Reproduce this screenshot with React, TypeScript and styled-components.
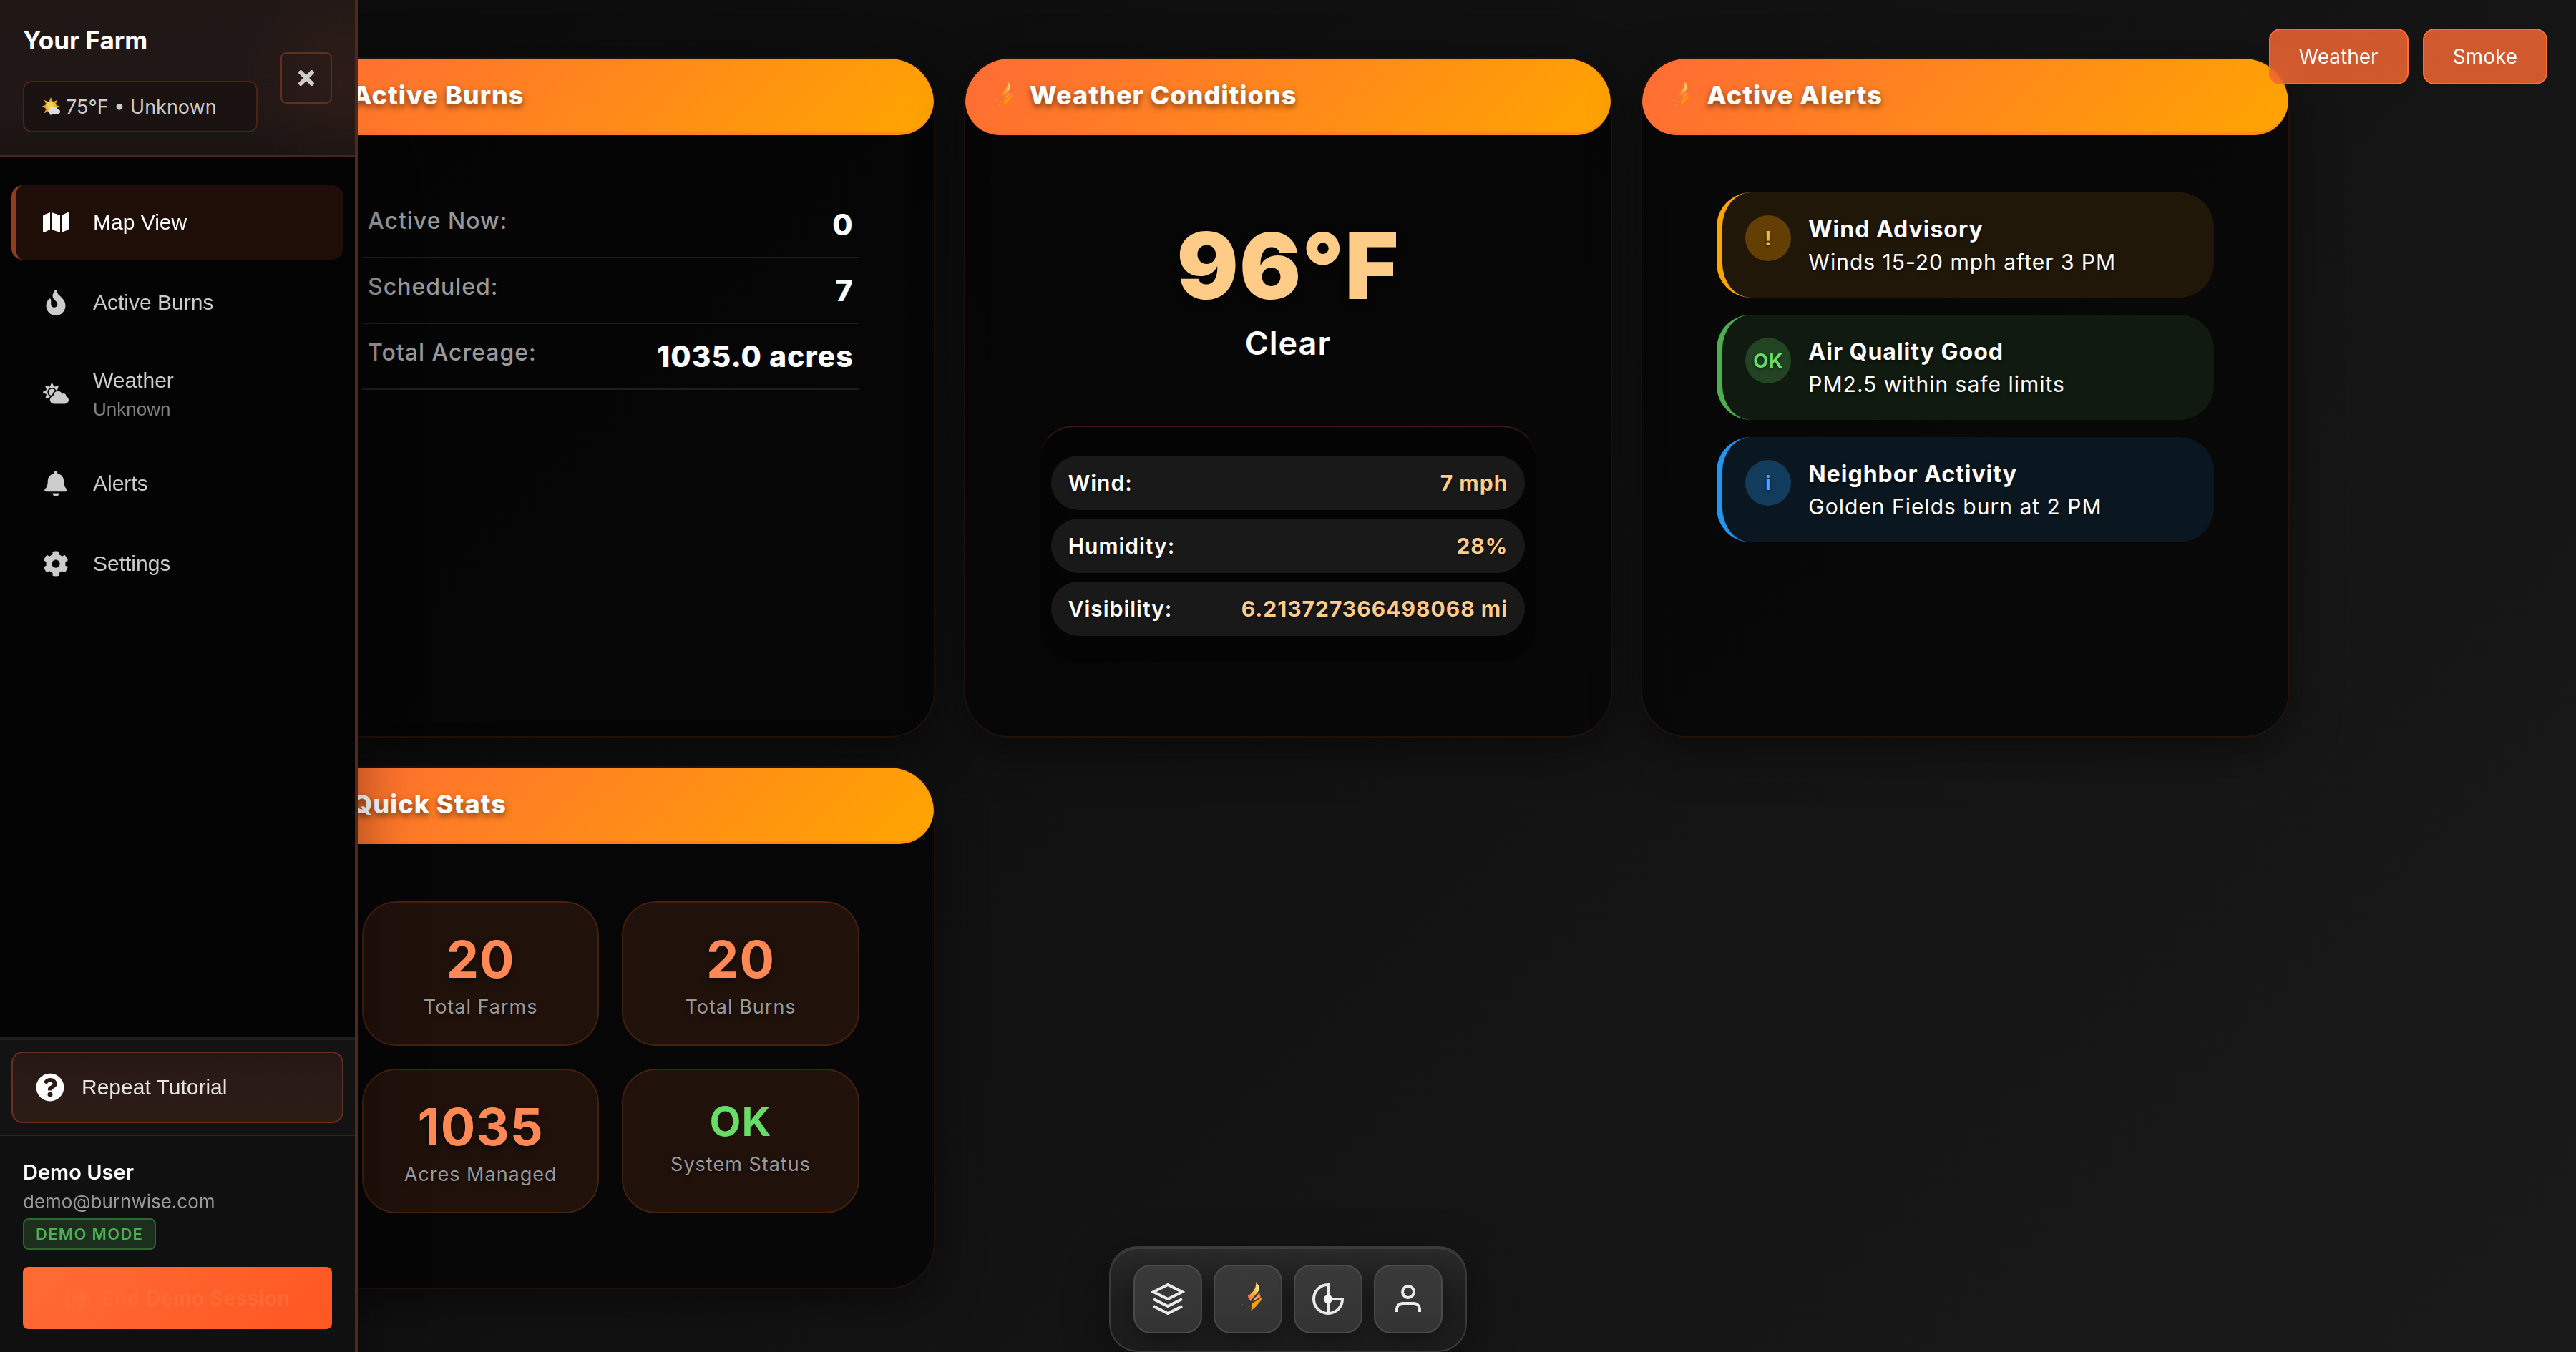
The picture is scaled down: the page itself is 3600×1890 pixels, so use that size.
import React from "react";
import styled, { createGlobalStyle, css } from "styled-components";
import {
  FaBell,
  FaCloudSun,
  FaCog,
  FaFire,
  FaMap,
  FaQuestionCircle,
  FaSignOutAlt,
  FaTimes,
} from "react-icons/fa";

const inter = `Inter, "Liberation Sans", sans-serif`;
const arial = `"Liberation Sans", Arial, sans-serif`;

const GlobalStyle = createGlobalStyle`
  *, *::before, *::after { box-sizing: border-box; }
  body {
    margin: 0;
    background: #0a0a0a;
    color: #ffffff;
    font-family: ${inter};
  }
  h1, h2, h3, p, dl, dd, dt, ul { margin: 0; padding: 0; }
  ul { list-style: none; }
  button { font: inherit; cursor: pointer; }
`;

/* ---------- Page ---------- */

const Page = styled.div`
  min-height: 100vh;
  background: linear-gradient(135deg, #0a0a0a 0%, #1a1a1a 100%);
`;

const Dashboard = styled.main`
  display: grid;
  grid-template-columns: repeat(3, minmax(0, 1fr));
  gap: 40px;
  max-width: 2800px;
  margin: 0 auto;
  padding: 80px 0;
  letter-spacing: 1px;
`;

/* ---------- Cards ---------- */

const CardBox = styled.section`
  overflow: hidden;
  border: 2px solid rgba(255, 107, 53, 0.1);
  border-radius: 64px;
  background: rgba(0, 0, 0, 0.6);
  box-shadow: 0 16px 64px rgba(0, 0, 0, 0.5);
`;

const CardHeader = styled.header`
  display: flex;
  align-items: center;
  gap: 20px;
  padding: 28px 30px;
  border-bottom: 4px solid rgba(255, 107, 53, 0.3);
  border-radius: 48px;
  background: linear-gradient(135deg, #ff6b35 0%, #ffa500 100%);
`;

const CardTitle = styled.h2`
  font-size: 36px;
  font-weight: 800;
  line-height: 47px;
  text-shadow: 0 4px 8px rgba(0, 0, 0, 0.5);
`;

const CardBody = styled.div`
  padding: 80px 104px 104px;
`;

const BurnRow = styled.div`
  display: flex;
  justify-content: space-between;
  align-items: flex-start;
  padding: 16px 8px;
  border-bottom: 2px solid #1e1e1e;
`;

const BurnLabel = styled.dt`
  color: #999999;
  font-size: 32px;
  font-weight: 500;
  line-height: 48px;
`;

const BurnValue = styled.dd`
  font-size: 41px;
  font-weight: 800;
  line-height: 58px;
`;

const Current = styled.div`
  display: flex;
  flex-direction: column;
  align-items: center;
  padding: 40px 0 70px;
`;

const Temperature = styled.p`
  color: #ffcc88;
  font-size: 128px;
  font-weight: 900;
  line-height: 126px;
  text-shadow: 0 4px 8px rgba(0, 0, 0, 0.5);
`;

const Condition = styled.p`
  font-size: 45px;
  font-weight: 600;
  line-height: 90px;
`;

const Details = styled.dl`
  display: grid;
  gap: 12px;
  padding: 40px 16px 36px;
  border-top: 2px solid #3a1a10;
  border-radius: 48px;
  background: rgba(0, 0, 0, 0.3);
`;

const DetailRow = styled.div`
  display: flex;
  justify-content: space-between;
  padding: 12px 24px;
  border-radius: 38px;
  background: #191919;
  font-size: 30px;
  line-height: 52px;
  text-shadow: 0 2px 4px rgba(0, 0, 0, 0.5);
`;

const DetailLabel = styled.dt`
  font-weight: 600;
`;

const DetailValue = styled.dd`
  color: #ffcc88;
  font-weight: 700;
`;

const Alerts = styled.ul`
  display: grid;
  gap: 24px;
`;

type Tone = "warning" | "good" | "info";

const tones: Record<Tone, { edge: string; fill: string; badge: string; text: string }> = {
  warning: { edge: "#ffa500", fill: "#211708", badge: "#633f04", text: "#ffb733" },
  good: { edge: "#4caf50", fill: "#101a10", badge: "#224423", text: "#66dd66" },
  info: { edge: "#2196f3", fill: "#0b1720", badge: "#123b5c", text: "#4da6ff" },
};

const Alert = styled.li<{ $tone: Tone }>`
  display: flex;
  align-items: flex-start;
  gap: 24px;
  padding: 32px;
  border-left: 8px solid ${(p) => tones[p.$tone].edge};
  border-radius: 48px;
  background: ${(p) => tones[p.$tone].fill};
  text-shadow: 0 2px 4px rgba(0, 0, 0, 0.6);
`;

const AlertBadge = styled.span<{ $tone: Tone }>`
  display: grid;
  place-items: center;
  flex: none;
  width: 64px;
  height: 64px;
  border-radius: 50%;
  background: ${(p) => tones[p.$tone].badge};
  color: ${(p) => tones[p.$tone].text};
  font-size: 27px;
  font-weight: 700;
`;

const AlertText = styled.div`
  display: grid;
  gap: 8px;
`;

const AlertTitle = styled.h3`
  font-size: 32px;
  font-weight: 700;
  line-height: 40px;
`;

const AlertNote = styled.p`
  font-size: 30px;
  line-height: 35px;
`;

const Stats = styled.dl`
  display: grid;
  grid-template-columns: repeat(2, minmax(0, 1fr));
  gap: 32px;
`;

const Stat = styled.div`
  display: flex;
  flex-direction: column-reverse;
  justify-content: flex-end;
  align-items: center;
  padding: 32px;
  border: 2px solid #46200f;
  border-radius: 48px;
  background: #20110b;
`;

const StatValue = styled.dd<{ $ok?: boolean }>`
  color: #ff8855;
  font-size: 72px;
  font-weight: 700;
  line-height: 94px;
  text-shadow: 0 4px 8px rgba(0, 0, 0, 0.5);
  ${(p) =>
    p.$ok &&
    css`
      color: #66dd66;
      font-size: 57px;
      line-height: 80px;
      text-shadow: none;
    `}
`;

const StatLabel = styled.dt`
  color: #999999;
  font-size: 27px;
  line-height: 40px;
  text-shadow: 0 2px 4px rgba(0, 0, 0, 0.6);
`;

/* ---------- Sidebar ---------- */

const Sidebar = styled.aside`
  position: fixed;
  top: 0;
  left: 0;
  z-index: 3;
  display: flex;
  flex-direction: column;
  width: 500px;
  height: 100vh;
  border-right: 4px solid #52281a;
  background: #030303;
  box-shadow: 0 240px 80px rgba(0, 0, 0, 0.4);
`;

const SidebarHeader = styled.header`
  display: flex;
  align-items: center;
  gap: 32px;
  padding: 32px;
  border-bottom: 2px solid #4a2517;
  background:
    radial-gradient(circle at 96% 52%, rgba(255, 107, 53, 0.06), transparent 140px),
    linear-gradient(180deg, #211816 0%, #201716 70%, #1b1413 100%);
`;

const FarmInfo = styled.div`
  display: grid;
  flex: 1;
  gap: 32px;
`;

const FarmName = styled.h1`
  font-size: 35px;
  font-weight: 700;
  line-height: 49px;
`;

const FarmWeather = styled.p`
  display: flex;
  align-items: center;
  gap: 8px;
  height: 72px;
  padding: 0 24px;
  border: 2px solid #482317;
  border-radius: 12px;
  background: #1a1210;
  color: #cccccc;
  font-size: 27px;
`;

const CloseButton = styled.button`
  display: grid;
  place-items: center;
  width: 72px;
  height: 72px;
  padding: 0;
  border: 2px solid #5f2f1f;
  border-radius: 8px;
  background: transparent;
  color: #d0cccb;
  font-size: 32px;
`;

const Menu = styled.nav`
  display: flex;
  flex: 1;
  flex-direction: column;
  gap: 8px;
  padding: 40px 16px;
`;

const MenuItem = styled.button<{ $active?: boolean }>`
  display: flex;
  align-items: center;
  gap: 28px;
  min-height: 104px;
  padding: 28px 32px;
  border: 0;
  border-left: 6px solid ${(p) => (p.$active ? "#913e20" : "transparent")};
  border-radius: 16px;
  background: ${(p) => (p.$active ? "#1e0e07" : "transparent")};
  color: ${(p) => (p.$active ? "#ffffff" : "#cccccc")};
  font-family: ${arial};
  font-size: 30px;
  text-align: left;
`;

const MenuIcon = styled.span`
  display: grid;
  place-items: center;
  width: 48px;
  font-size: 36px;
`;

const MenuText = styled.span`
  display: grid;
  gap: 4px;
  line-height: 42px;
`;

const MenuNote = styled.small`
  color: #808080;
  font-size: 26px;
  line-height: 31px;
`;

const TutorialArea = styled.div`
  padding: 16px;
  border-top: 4px solid #1f1f1f;
  border-bottom: 2px solid #3f2017;
  background: #131313;
`;

const TutorialButton = styled.button`
  display: flex;
  align-items: center;
  gap: 24px;
  width: 100%;
  height: 100px;
  padding: 0 32px;
  border: 2px solid #65301f;
  border-radius: 16px;
  background: linear-gradient(180deg, #261714 0%, #2b1b17 50%, #2b1c16 100%);
  color: #e6e3e2;
  font-family: ${arial};
  font-size: 30px;

  svg {
    color: #ffffff;
    font-size: 40px;
  }
`;

const Account = styled.section`
  display: flex;
  flex-direction: column;
  align-items: flex-start;
  padding: 32px;
  background: #101010;
`;

const AccountName = styled.h2`
  font-size: 29px;
  font-weight: 600;
  line-height: 37px;
`;

const AccountMail = styled.p`
  color: #999999;
  font-size: 26px;
  line-height: 46px;
`;

const ModeBadge = styled.span`
  display: flex;
  align-items: center;
  height: 44px;
  margin-bottom: 24px;
  padding: 0 16px;
  border: 2px solid #2e6632;
  border-radius: 8px;
  background: #1c2e1d;
  color: #4caf50;
  font-size: 22px;
  font-weight: 600;
  letter-spacing: 0.06em;
`;

const EndButton = styled.button`
  display: flex;
  justify-content: center;
  align-items: center;
  gap: 16px;
  width: 100%;
  height: 87px;
  padding: 0;
  border: 0;
  border-radius: 8px;
  background: linear-gradient(135deg, #ff6b35 0%, #ff5722 100%);
  color: #ff6b35;
  font-size: 28px;
  font-weight: 600;
  letter-spacing: 0.025em;

  svg {
    font-size: 36px;
  }
`;

/* ---------- Floating controls ---------- */

const LayerToggles = styled.div`
  position: fixed;
  top: 40px;
  right: 40px;
  z-index: 2;
  display: flex;
  gap: 20px;
`;

const ToggleButton = styled.button`
  height: 78px;
  padding: 0 40px;
  border: 2px solid #ff6b35;
  border-radius: 16px;
  background: rgba(255, 107, 53, 0.8);
  backdrop-filter: blur(20px);
  color: #ffffff;
  font-size: 28px;
`;

const Dock = styled.nav`
  position: fixed;
  bottom: 0;
  left: 50%;
  z-index: 2;
  display: flex;
  gap: 16px;
  padding: 24px 32px;
  border: 2px solid #3a3a3a;
  border-radius: 40px;
  background: linear-gradient(180deg, #2a2a2a 0%, #1d1d1d 50%, #1c1c1c 100%);
  box-shadow:
    0 16px 64px rgba(0, 0, 0, 0.4),
    inset 0 2px 0 #3d3d3d;
  transform: translateX(-50%);
`;

const DockButton = styled.button`
  display: grid;
  place-items: center;
  width: 96px;
  height: 96px;
  padding: 0;
  border: 2px solid #4a4a4a;
  border-radius: 24px;
  background: linear-gradient(180deg, #3a3a3a 0%, #333333 100%);
  box-shadow: 0 8px 24px rgba(0, 0, 0, 0.3);
  color: #ebebeb;
`;

const LineSvg = styled.svg`
  width: 48px;
  height: 48px;
  fill: none;
  stroke: currentColor;
  stroke-width: 2;
`;

const FlameSvg = styled.svg<{ $size: number; $soft?: boolean }>`
  flex: none;
  width: ${(p) => p.$size}px;
  height: ${(p) => p.$size}px;
  opacity: ${(p) => (p.$soft ? 0.8 : 1)};
`;

const SunSvg = styled.svg`
  flex: none;
  width: 26px;
  height: 26px;
`;

/* ---------- Drawings ---------- */

function Flame({ size, soft, id }: { size: number; soft?: boolean; id: string }) {
  return (
    <FlameSvg $size={size} $soft={soft} viewBox="0 0 144 144" aria-hidden="true">
      <defs>
        <linearGradient id={`${id}-a`} x1="0.7" y1="0" x2="0.2" y2="1">
          <stop offset="0" stopColor="#ffe07a" />
          <stop offset="0.45" stopColor="#ffc02e" />
          <stop offset="1" stopColor="#ff6b35" />
        </linearGradient>
        <linearGradient id={`${id}-b`} x1="0.8" y1="0" x2="0.2" y2="1">
          <stop offset="0" stopColor="#ff6b35" />
          <stop offset="1" stopColor="#ffb899" />
        </linearGradient>
      </defs>
      <path
        d="M106 0 C110 8 120 16 119 28 C117 46 96 58 84 82 C78 76 72 68 72 58 C86 50 108 32 106 0Z"
        fill={`url(#${id}-a)`}
      />
      <path d="M113 14 C119 20 120 28 117 36 C112 42 106 46 103 50 C110 38 114 28 113 14Z" fill="#fff0c0" />
      <path d="M121 42 C120 50 124 56 125 64 C114 70 104 74 94 82 C98 66 112 60 121 42Z" fill={`url(#${id}-b)`} />
      <path d="M131 63 C128 82 118 88 108 100 C102 108 94 114 85 120 C88 110 86 102 88 92 C100 82 118 76 131 63Z" fill="#ffa000" />
      <g fill={soft ? "#ffe0b0" : "#8c7a62"}>
        <circle cx="49" cy="94" r="2" />
        <circle cx="64" cy="116" r="2" />
        <circle cx="69" cy="100" r="2" />
        <circle cx="80" cy="102" r="2" />
      </g>
    </FlameSvg>
  );
}

function SunBehindCloud() {
  return (
    <SunSvg viewBox="0 0 26 26" aria-hidden="true">
      <g fill="#e0a526">
        {[0, 45, 90, 135, 180, 225, 270, 315].map((angle) => (
          <path key={angle} d="M13 0 L15 5 H11Z" transform={`rotate(${angle} 13 13)`} />
        ))}
      </g>
      <circle cx="13" cy="13" r="8" fill="#f2b92c" />
      <circle cx="12" cy="11" r="5" fill="#f7cf55" />
      <path
        d="M12 23 a4 4 0 0 1 -1 -7 a4 4 0 0 1 5 -2 a5 5 0 0 1 7 3 a3 3 0 0 1 0 6Z"
        fill="#dcdde2"
      />
    </SunSvg>
  );
}

/* ---------- Content ---------- */

const burns = [
  ["Active Now:", "0"],
  ["Scheduled:", "7"],
  ["Total Acreage:", "1035.0 acres"],
];

const conditions = [
  ["Wind:", "7 mph"],
  ["Humidity:", "28%"],
  ["Visibility:", "6.213727366498068 mi"],
];

const alerts: { tone: Tone; mark: string; title: string; note: string }[] = [
  { tone: "warning", mark: "!", title: "Wind Advisory", note: "Winds 15-20 mph after 3 PM" },
  { tone: "good", mark: "OK", title: "Air Quality Good", note: "PM2.5 within safe limits" },
  { tone: "info", mark: "i", title: "Neighbor Activity", note: "Golden Fields burn at 2 PM" },
];

const stats = [
  { label: "Total Farms", value: "20" },
  { label: "Total Burns", value: "20" },
  { label: "Acres Managed", value: "1035" },
  { label: "System Status", value: "OK", ok: true },
];

const menu = [
  { label: "Map View", icon: <FaMap />, active: true },
  { label: "Active Burns", icon: <FaFire /> },
  { label: "Weather", icon: <FaCloudSun />, note: "Unknown" },
  { label: "Alerts", icon: <FaBell /> },
  { label: "Settings", icon: <FaCog /> },
];

function Card({ id, title, children }: { id: string; title: string; children: React.ReactNode }) {
  return (
    <CardBox aria-labelledby={id}>
      <CardHeader>
        <Flame size={40} soft id={`${id}-flame`} />
        <CardTitle id={id}>{title}</CardTitle>
      </CardHeader>
      <CardBody>{children}</CardBody>
    </CardBox>
  );
}

export default function App() {
  return (
    <Page>
      <GlobalStyle />

      <Sidebar>
        <SidebarHeader>
          <FarmInfo>
            <FarmName>Your Farm</FarmName>
            <FarmWeather>
              <SunBehindCloud />
              75°F • Unknown
            </FarmWeather>
          </FarmInfo>
          <CloseButton type="button" aria-label="Close sidebar">
            <FaTimes />
          </CloseButton>
        </SidebarHeader>

        <Menu aria-label="Main">
          {menu.map((item) => (
            <MenuItem key={item.label} type="button" $active={item.active}>
              <MenuIcon>{item.icon}</MenuIcon>
              <MenuText>
                {item.label}
                {item.note && <MenuNote>{item.note}</MenuNote>}
              </MenuText>
            </MenuItem>
          ))}
        </Menu>

        <TutorialArea>
          <TutorialButton type="button">
            <FaQuestionCircle />
            Repeat Tutorial
          </TutorialButton>
        </TutorialArea>

        <Account>
          <AccountName>Demo User</AccountName>
          <AccountMail>demo@burnwise.com</AccountMail>
          <ModeBadge>DEMO MODE</ModeBadge>
          <EndButton type="button">
            <FaSignOutAlt />
            End Demo Session
          </EndButton>
        </Account>
      </Sidebar>

      <Dashboard>
        <Card id="burns" title="Active Burns">
          <dl>
            {burns.map(([label, value]) => (
              <BurnRow key={label}>
                <BurnLabel>{label}</BurnLabel>
                <BurnValue>{value}</BurnValue>
              </BurnRow>
            ))}
          </dl>
        </Card>

        <Card id="weather" title="Weather Conditions">
          <Current>
            <Temperature>96°F</Temperature>
            <Condition>Clear</Condition>
          </Current>
          <Details>
            {conditions.map(([label, value]) => (
              <DetailRow key={label}>
                <DetailLabel>{label}</DetailLabel>
                <DetailValue>{value}</DetailValue>
              </DetailRow>
            ))}
          </Details>
        </Card>

        <Card id="alerts" title="Active Alerts">
          <Alerts>
            {alerts.map((alert) => (
              <Alert key={alert.title} $tone={alert.tone}>
                <AlertBadge $tone={alert.tone}>{alert.mark}</AlertBadge>
                <AlertText>
                  <AlertTitle>{alert.title}</AlertTitle>
                  <AlertNote>{alert.note}</AlertNote>
                </AlertText>
              </Alert>
            ))}
          </Alerts>
        </Card>

        <Card id="stats" title="Quick Stats">
          <Stats>
            {stats.map((stat) => (
              <Stat key={stat.label}>
                <StatLabel>{stat.label}</StatLabel>
                <StatValue $ok={stat.ok}>{stat.value}</StatValue>
              </Stat>
            ))}
          </Stats>
        </Card>
      </Dashboard>

      <LayerToggles>
        <ToggleButton type="button">Weather</ToggleButton>
        <ToggleButton type="button">Smoke</ToggleButton>
      </LayerToggles>

      <Dock aria-label="Tools">
        <DockButton type="button" aria-label="Layers">
          <LineSvg viewBox="0 0 24 24">
            <path d="M12 2 2 7l10 5 10-5-10-5Z" />
            <path d="M2 17l10 5 10-5" />
            <path d="M2 12l10 5 10-5" />
          </LineSvg>
        </DockButton>
        <DockButton type="button" aria-label="Burns">
          <Flame size={48} id="dock-flame" />
        </DockButton>
        <DockButton type="button" aria-label="Analytics">
          <LineSvg viewBox="0 0 24 24">
            <path d="M12 12V2A10 10 0 1 0 22 12H12V22" />
            <circle cx="12" cy="12" r="3" fill="#f6f6f6" stroke="none" />
          </LineSvg>
        </DockButton>
        <DockButton type="button" aria-label="Profile">
          <LineSvg viewBox="0 0 24 24">
            <path d="M20 21v-2a4 4 0 0 0-4-4H8a4 4 0 0 0-4 4v2" />
            <circle cx="12" cy="7" r="4" />
          </LineSvg>
        </DockButton>
      </Dock>
    </Page>
  );
}
